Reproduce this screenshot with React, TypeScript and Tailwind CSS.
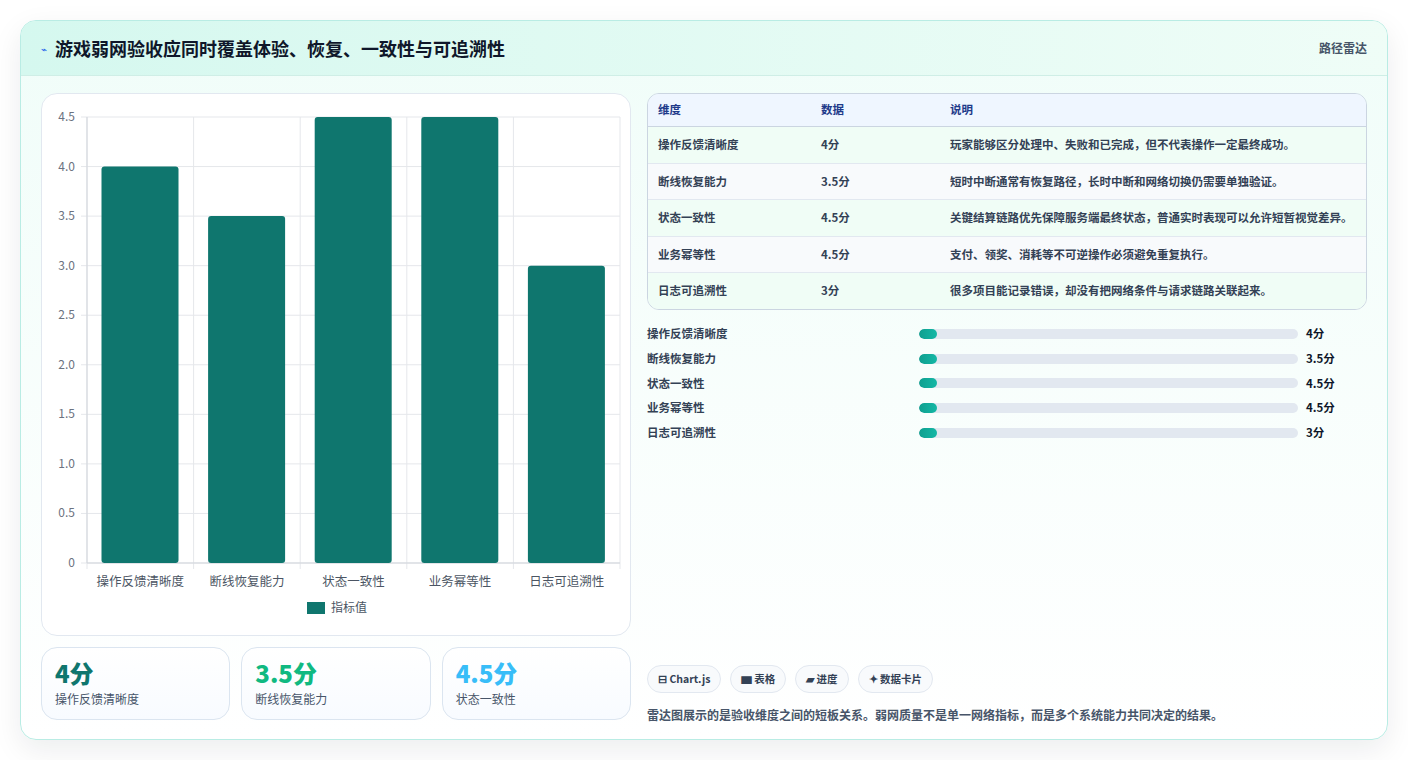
import React from "react";

const cats = ["操作反馈清晰度", "断线恢复能力", "状态一致性", "业务幂等性", "日志可追溯性"];
const vals = [4, 3.5, 4.5, 4.5, 3];
const rows = [
  ["操作反馈清晰度", "4分", "玩家能够区分处理中、失败和已完成，但不代表操作一定最终成功。"],
  ["断线恢复能力", "3.5分", "短时中断通常有恢复路径，长时中断和网络切换仍需要单独验证。"],
  ["状态一致性", "4.5分", "关键结算链路优先保障服务端最终状态，普通实时表现可以允许短暂视觉差异。"],
  ["业务幂等性", "4.5分", "支付、领奖、消耗等不可逆操作必须避免重复执行。"],
  ["日志可追溯性", "3分", "很多项目能记录错误，却没有把网络条件与请求链路关联起来。"],
];

function Chart() {
  const L = 45, T = 23, R = 578, B = 469;
  const h = B - T;
  const cw = (R - L) / 5;
  const ticks = [0, 0.5, 1, 1.5, 2, 2.5, 3, 3.5, 4, 4.5];
  return (
    <svg width="590" height="543" className="block">
      {ticks.map((t) => {
        const y = B - (t / 4.5) * h;
        return (
          <g key={t}>
            <line x1={L - 6} x2={R} y1={y} y2={y} stroke="#e5e7eb" />
            <text x={L - 12} y={y + 4} textAnchor="end" fontSize="12" fill="#6b7280">{t === 0 ? "0" : t.toFixed(1)}</text>
          </g>
        );
      })}
      {[0, 1, 2, 3, 4, 5].map((i) => (
        <line key={i} x1={L + i * cw} x2={L + i * cw} y1={T} y2={B + 6} stroke="#e5e7eb" />
      ))}
      <line x1={L} x2={L} y1={T} y2={B} stroke="#d1d5db" />
      <line x1={L} x2={R} y1={B} y2={B} stroke="#d1d5db" />
      {vals.map((v, i) => {
        const bh = (v / 4.5) * h;
        return <rect key={i} x={L + i * cw + 14.5} y={B - bh} width={77} height={bh} rx="3" fill="#0f766e" />;
      })}
      {cats.map((c, i) => (
        <text key={c} x={L + i * cw + cw / 2} y={492} textAnchor="middle" fontSize="12.5" fill="#4b5563">{c}</text>
      ))}
      <rect x="265" y="508" width="18" height="12" fill="#0f766e" />
      <text x="289" y="518" fontSize="12" fill="#4b5563">指标值</text>
    </svg>
  );
}

export default function App() {
  return (
    <div className="w-[1408px] h-[760px] bg-white p-5" style={{ fontFamily: '"Noto Sans CJK SC", "Noto Sans", sans-serif' }}>
      <div className="h-[720px] rounded-2xl border border-[#b9ece4] bg-gradient-to-b from-[#f0fdf9] to-white shadow-[0_10px_30px_rgba(15,23,42,0.08)] overflow-hidden flex flex-col">
        <div className="h-[55px] shrink-0 flex items-center justify-between px-5 bg-gradient-to-r from-[#d5f8ef] to-[#effdf7] border-b border-[#cfeee6]">
          <div className="flex items-center gap-2">
            <span className="text-[10px] text-[#2563eb]">⌁</span>
            <span className="text-[18px] font-bold text-[#0f172a]">游戏弱网验收应同时覆盖体验、恢复、一致性与可追溯性</span>
          </div>
          <span className="text-[12px] font-semibold text-[#475569]">路径雷达</span>
        </div>
        <div className="flex gap-4 px-5 pt-[17px]">
          <div className="w-[590px] flex flex-col gap-[11px]">
            <div className="h-[543px] rounded-2xl border border-[#e2e8f0] bg-white overflow-hidden"><Chart /></div>
            <div className="grid grid-cols-3 gap-[11px]">
              {[["4分", "text-[#0f766e]", "操作反馈清晰度"], ["3.5分", "text-[#10b981]", "断线恢复能力"], ["4.5分", "text-[#38bdf8]", "状态一致性"]].map(([v, c, l]) => (
                <div key={l} className="h-[73px] rounded-2xl border border-[#dbe5f0] bg-gradient-to-b from-white to-[#f8fbff] px-[13px] pt-[10px]">
                  <div className={`text-[24px] font-extrabold leading-[30px] ${c}`}>{v}</div>
                  <div className="text-[12px] text-[#475569] mt-[2px]">{l}</div>
                </div>
              ))}
            </div>
          </div>
          <div className="flex-1 flex flex-col">
            <div className="rounded-xl border border-[#cbd5e1] overflow-hidden text-[11.5px] font-semibold text-[#334155]">
              <div className="flex h-[33px] items-center bg-[#eff6ff] text-[#1e3a8a] border-b border-[#cbd5e1]">
                <div className="w-[173px] pl-[10px]">维度</div>
                <div className="w-[129px]">数据</div>
                <div className="flex-1">说明</div>
              </div>
              {rows.map((r, i) => (
                <div key={i} className={`flex py-[9px] leading-[17.5px] ${i < 4 ? "border-b border-[#e2e8f0]" : ""} ${i % 2 === 0 ? "bg-[#f0fdf6]" : "bg-[#f8fafc]"}`}>
                  <div className="w-[173px] pl-[10px]">{r[0]}</div>
                  <div className="w-[129px]">{r[1]}</div>
                  <div className="flex-1 pr-[10px]">{r[2]}</div>
                </div>
              ))}
            </div>
            <div className="mt-[12px] flex flex-col">
              {cats.map((c, i) => (
                <div key={c} className="flex items-center h-[24.7px] text-[11.5px] font-semibold text-[#334155]">
                  <div className="w-[272px]">{c}</div>
                  <div className="w-[379px] h-[10px] rounded-full bg-[#e2e8f0] overflow-hidden">
                    <div className="w-[18px] h-full rounded-full bg-gradient-to-r from-[#0f9f8f] to-[#14b8a6]" />
                  </div>
                  <div className="ml-[8px] font-bold text-[#0f172a]">{vals[i]}分</div>
                </div>
              ))}
            </div>
            <div className="mt-[220px] flex gap-[9px]">
              {["⊟ Chart.js", "▆ 表格", "▰ 进度", "✦ 数据卡片"].map((t) => (
                <span key={t} className="h-[28px] px-[10px] rounded-full border border-[#e2e8f0] bg-[#f8fafc] text-[10.5px] font-bold text-[#334155] flex items-center">{t}</span>
              ))}
            </div>
            <div className="mt-[13px] text-[12px] font-semibold text-[#475569]">雷达图展示的是验收维度之间的短板关系。弱网质量不是单一网络指标，而是多个系统能力共同决定的结果。</div>
          </div>
        </div>
      </div>
    </div>
  );
}
